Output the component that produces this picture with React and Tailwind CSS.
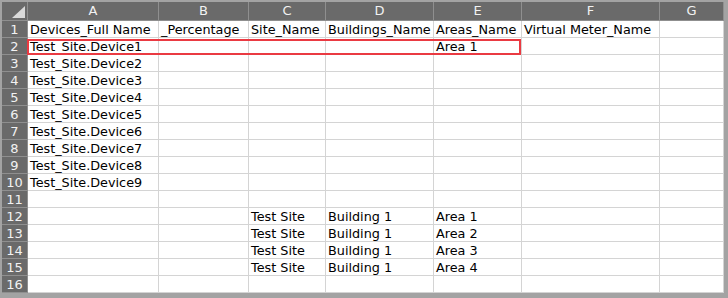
import React from "react";

const cols = ["A", "B", "C", "D", "E", "F", "G"];

// sheet contents, keyed by row number
const data = {
  1: ["Devices_Full Name", "_Percentage", "Site_Name", "Buildings_Name", "Areas_Name", "Virtual Meter_Name", ""],
  2: ["Test_Site.Device1", "", "", "", "Area 1", "", ""],
  3: ["Test_Site.Device2", "", "", "", "", "", ""],
  4: ["Test_Site.Device3", "", "", "", "", "", ""],
  5: ["Test_Site.Device4", "", "", "", "", "", ""],
  6: ["Test_Site.Device5", "", "", "", "", "", ""],
  7: ["Test_Site.Device6", "", "", "", "", "", ""],
  8: ["Test_Site.Device7", "", "", "", "", "", ""],
  9: ["Test_Site.Device8", "", "", "", "", "", ""],
  10: ["Test_Site.Device9", "", "", "", "", "", ""],
  12: ["", "", "Test Site", "Building 1", "Area 1", "", ""],
  13: ["", "", "Test Site", "Building 1", "Area 2", "", ""],
  14: ["", "", "Test Site", "Building 1", "Area 3", "", ""],
  15: ["", "", "Test Site", "Building 1", "Area 4", "", ""],
};

const rows = Array.from({ length: 16 }, (_, i) => i + 1);

const App = () => {
  return (
    <div className="w-[728px] h-[298px] bg-white overflow-hidden">
      <div
        className="relative w-[728px] h-[298px] border-l-2 border-t-2 border-r-4 border-b-[5px] border-[#a3a3a3] bg-white text-[12.8px] text-black"
        style={{ fontFamily: '"DejaVu Sans", Tahoma, sans-serif' }}
      >
        <div className="grid grid-cols-[26px_131px_90px_77px_108px_88px_138px_64px]">
          {/* corner */}
          <div className="relative h-[19px] bg-[#6a6a6a] border-r border-b border-[#8f8f8f]">
            <svg className="absolute right-[2px] bottom-[2px]" width="13" height="12" viewBox="0 0 13 12">
              <polygon points="0,12 13,12 13,0" fill="#d9d9d9" />
            </svg>
          </div>
          {cols.map((c) => (
            <div
              key={c}
              className="h-[19px] bg-[#6a6a6a] border-r border-b border-[#8f8f8f] text-center text-[13px] text-[#f2f2f2] leading-[18px]"
            >
              {c}
            </div>
          ))}

          {rows.map((r) => (
            <React.Fragment key={r}>
              <div className="h-[17px] bg-[#6a6a6a] border-r border-b border-[#8f8f8f] text-center text-[13px] text-[#f2f2f2] leading-[17px]">
                {r}
              </div>
              {cols.map((c, i) => (
                <div
                  key={c}
                  className="h-[17px] border-r border-b border-[#d4d4d4] pl-[2px] leading-[17px] whitespace-nowrap overflow-visible"
                >
                  {data[r] ? data[r][i] : ""}
                </div>
              ))}
            </React.Fragment>
          ))}
        </div>

        {/* highlight on row 2 */}
        <div className="absolute left-[25px] top-[37px] w-[494px] h-[16px] border-2 border-[#ea3a42] pointer-events-none" />
      </div>
    </div>
  );
};

export default App;
